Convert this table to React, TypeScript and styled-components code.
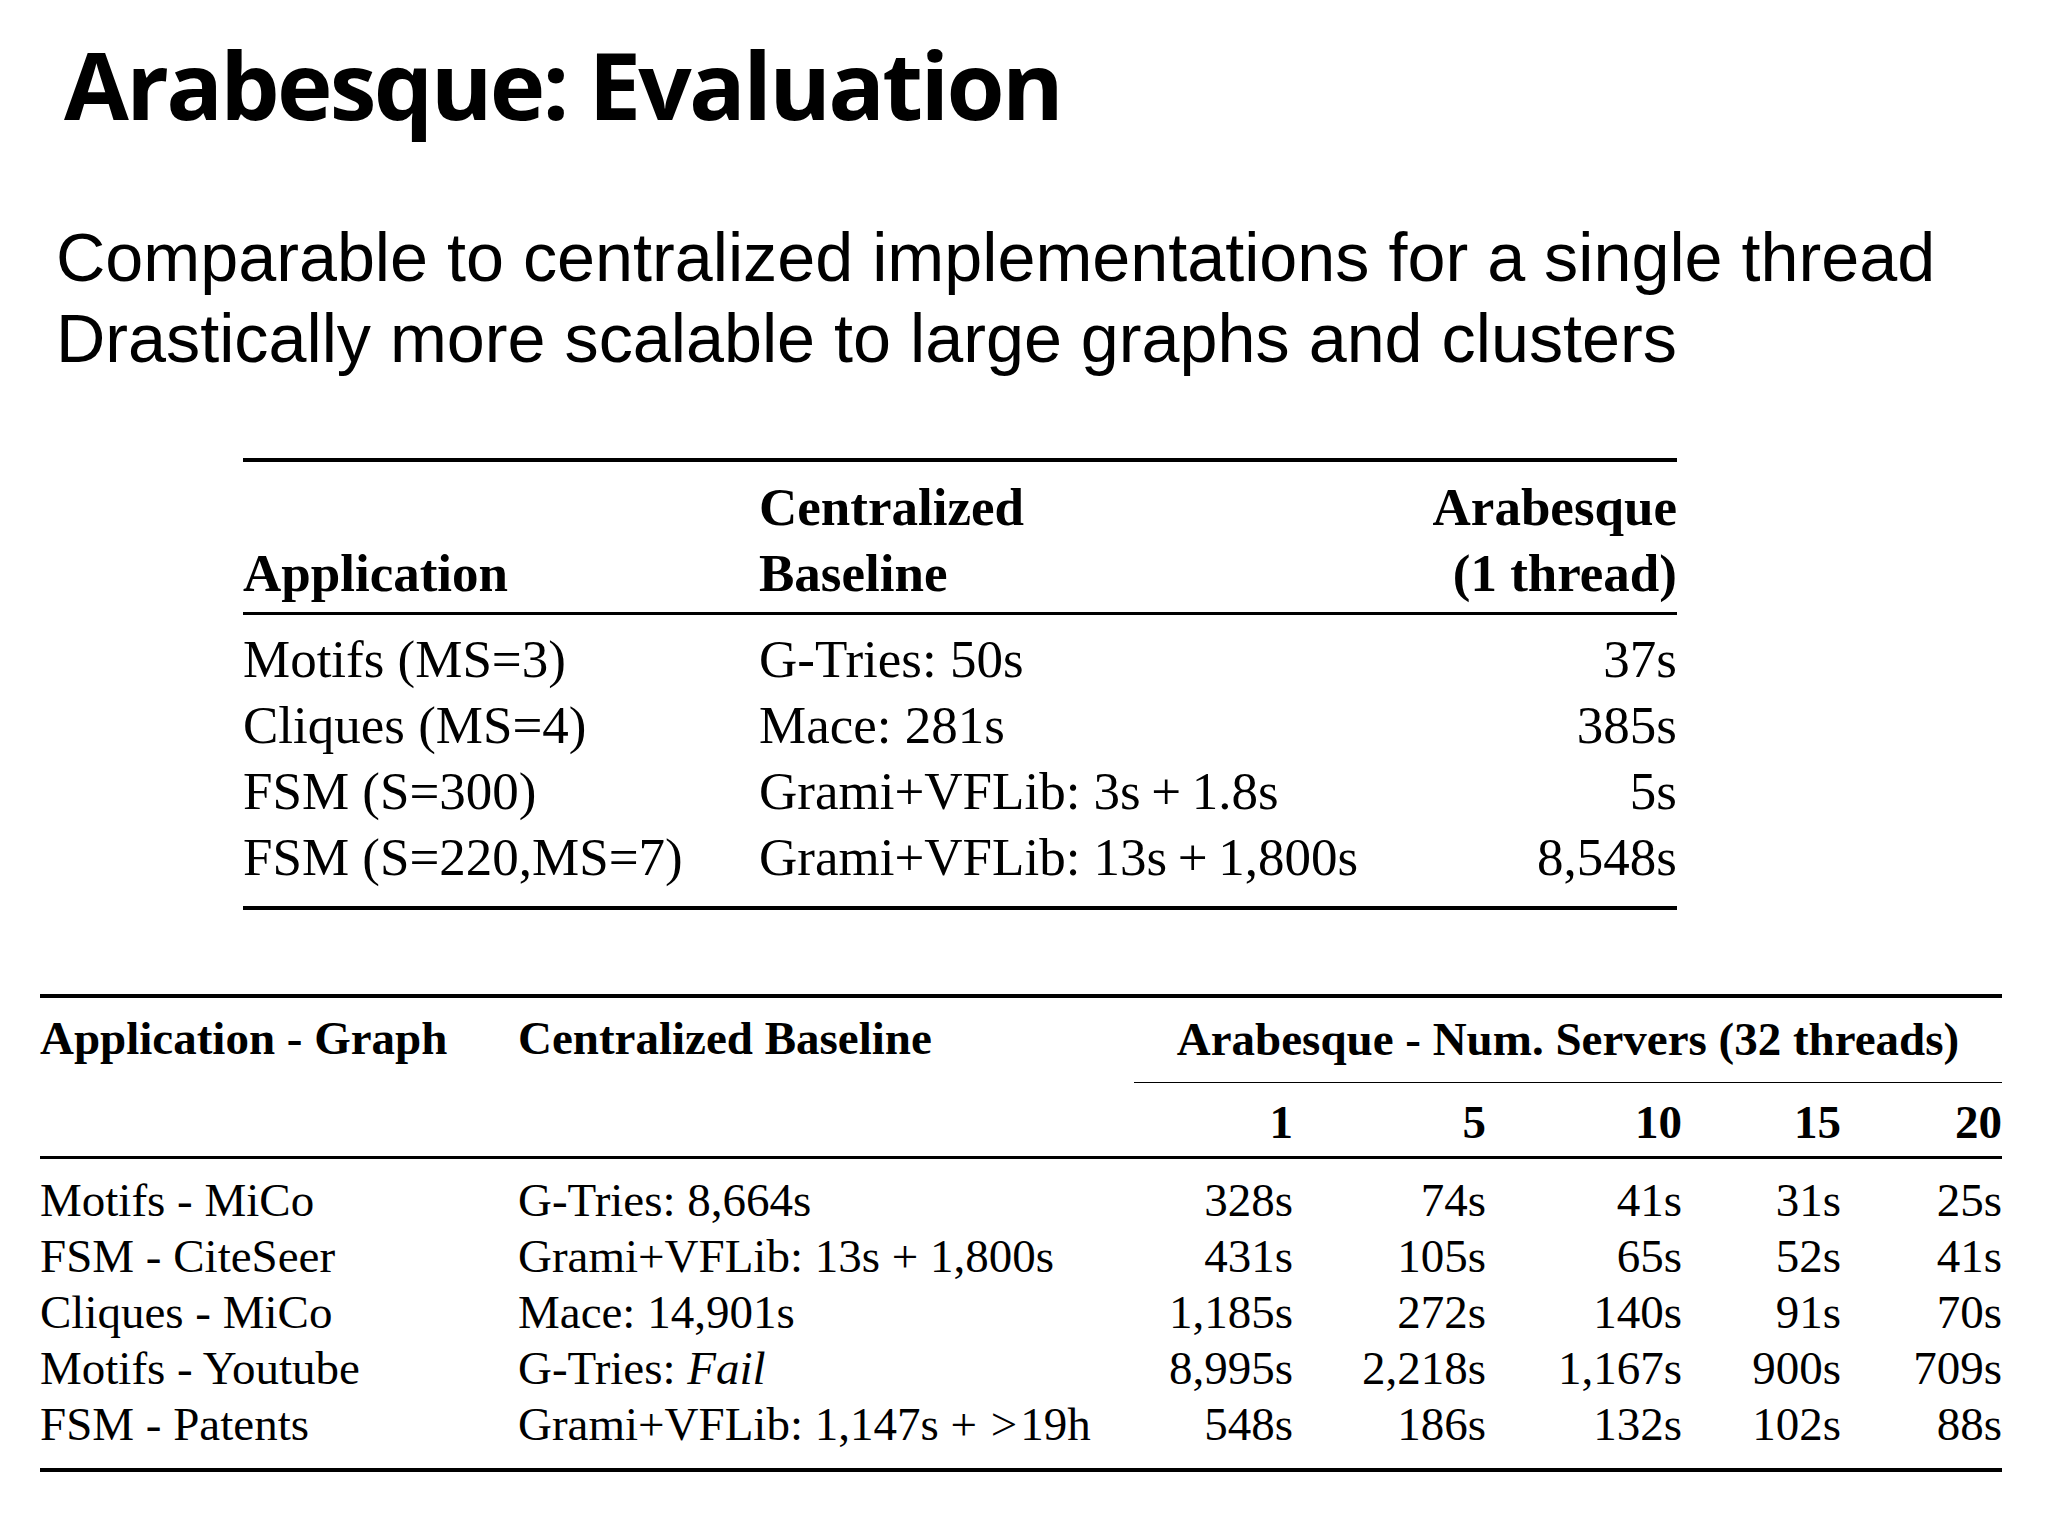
import React from "react";
import styled, { createGlobalStyle } from "styled-components";

const GlobalStyle = createGlobalStyle`
  html, body { margin: 0; padding: 0; background: #ffffff; }
  body { color: #000000; }
`;

const Slide = styled.div`
  width: 2048px;
  height: 1536px;
  box-sizing: border-box;
  padding-top: 28px;
  background: #ffffff;
  display: flex;
  flex-direction: column;
  overflow: hidden;
`;

const Title = styled.h1`
  margin: 0 0 0 64px;
  font-family: "Open Sans", "Noto Sans", sans-serif;
  font-weight: 700;
  font-size: 94px;
  line-height: 113px;
  letter-spacing: -2.7px;
  color: #000;
`;

const Lead = styled.div`
  margin: 76px 0 0 56px;
  font-family: "Liberation Sans", Arial, sans-serif;
  font-size: 68.3px;
  line-height: 81px;
  color: #000;
`;

const LeadLine = styled.div`
  white-space: nowrap;
`;

const Rule = styled.div<{ $w: number }>`
  height: ${(p) => p.$w}px;
  background: #000;
`;

/* ---------- Table 1 ---------- */

const TableOne = styled.div`
  margin: 79px 0 0 243px;
  width: 1434px;
  display: flex;
  flex-direction: column;
  font-family: "Liberation Serif", "Times New Roman", serif;
  font-size: 53px;
  line-height: 66px;
  color: #000;
`;

const OneRow = styled.div<{ $head?: boolean; $pt?: number; $pb?: number }>`
  display: grid;
  grid-template-columns: 516px 1fr auto;
  align-items: end;
  font-weight: ${(p) => (p.$head ? 700 : 400)};
  padding-top: ${(p) => p.$pt ?? 0}px;
  padding-bottom: ${(p) => p.$pb ?? 0}px;
  white-space: nowrap;
`;

const Cell = styled.div<{ $right?: boolean }>`
  text-align: ${(p) => (p.$right ? "right" : "left")};
`;

/* ---------- Table 2 ---------- */

const cols2 = "478px 616px 159px 193px 196px 159px 161px";

const TableTwo = styled.div`
  margin: 84px 0 0 40px;
  width: 1962px;
  display: flex;
  flex-direction: column;
  font-family: "Liberation Serif", "Times New Roman", serif;
  font-size: 47px;
  line-height: 56px;
  color: #000;
`;

const TwoRow = styled.div<{ $head?: boolean; $pt?: number; $pb?: number }>`
  display: grid;
  grid-template-columns: ${cols2};
  align-items: end;
  font-weight: ${(p) => (p.$head ? 700 : 400)};
  padding-top: ${(p) => p.$pt ?? 0}px;
  padding-bottom: ${(p) => p.$pb ?? 0}px;
  white-space: nowrap;
`;

const SpanHead = styled.div`
  grid-column: 3 / 8;
  text-align: center;
  padding-bottom: 15px;
  border-bottom: 1.5px solid #000;
`;

const HeadCell = styled.div`
  padding-bottom: 16.5px;
`;

const Num = styled.div`
  text-align: right;
`;

const Rel = styled.span`
  margin: 0 3px 0 2px;
`;

const Blank = styled.div``;

const t1 = [
  ["Motifs (MS=3)", "G-Tries: 50s", "37s"],
  ["Cliques (MS=4)", "Mace: 281s", "385s"],
  ["FSM (S=300)", "Grami+VFLib: 3s\u2009+\u20091.8s", "5s"],
  ["FSM (S=220,MS=7)", "Grami+VFLib: 13s\u2009+\u20091,800s", "8,548s"],
];

const t2: { app: string; base: React.ReactNode; nums: string[] }[] = [
  { app: "Motifs - MiCo", base: "G-Tries: 8,664s", nums: ["328s", "74s", "41s", "31s", "25s"] },
  { app: "FSM - CiteSeer", base: "Grami+VFLib: 13s + 1,800s", nums: ["431s", "105s", "65s", "52s", "41s"] },
  { app: "Cliques - MiCo", base: "Mace: 14,901s", nums: ["1,185s", "272s", "140s", "91s", "70s"] },
  {
    app: "Motifs - Youtube",
    base: (
      <>
        G-Tries: <i>Fail</i>
      </>
    ),
    nums: ["8,995s", "2,218s", "1,167s", "900s", "709s"],
  },
  {
    app: "FSM - Patents",
    base: (
      <>
        Grami+VFLib: 1,147s +<Rel> &gt;</Rel>19h
      </>
    ),
    nums: ["548s", "186s", "132s", "102s", "88s"],
  },
];

export default function App() {
  return (
    <>
      <GlobalStyle />
      <Slide>
        <Title>Arabesque: Evaluation</Title>
        <Lead>
          <LeadLine>Comparable to centralized implementations for a single thread</LeadLine>
          <LeadLine>Drastically more scalable to large graphs and clusters</LeadLine>
        </Lead>

        <TableOne>
          <Rule $w={4} />
          <OneRow $head $pt={12} $pb={6}>
            <Cell>Application</Cell>
            <Cell>
              Centralized
              <br />
              Baseline
            </Cell>
            <Cell $right>
              Arabesque
              <br />
              (1 thread)
            </Cell>
          </OneRow>
          <Rule $w={3} />
          <OneRow $pt={11} $pb={16}>
            <Cell>
              {t1.map((r) => (
                <div key={r[0]}>{r[0]}</div>
              ))}
            </Cell>
            <Cell>
              {t1.map((r) => (
                <div key={r[0]}>{r[1]}</div>
              ))}
            </Cell>
            <Cell $right>
              {t1.map((r) => (
                <div key={r[0]}>{r[2]}</div>
              ))}
            </Cell>
          </OneRow>
          <Rule $w={4} />
        </TableOne>

        <TableTwo>
          <Rule $w={4} />
          <TwoRow $head $pt={12}>
            <HeadCell>Application - Graph</HeadCell>
            <HeadCell>Centralized Baseline</HeadCell>
            <SpanHead>Arabesque - Num. Servers (32 threads)</SpanHead>
          </TwoRow>
          <TwoRow $head $pt={11.5} $pb={6}>
            <Blank />
            <Blank />
            {["1", "5", "10", "15", "20"].map((n) => (
              <Num key={n}>{n}</Num>
            ))}
          </TwoRow>
          <Rule $w={3} />
          <TwoRow $pt={13} $pb={16}>
            {t2.map((r) => (
              <React.Fragment key={r.app}>
                <div>{r.app}</div>
                <div>{r.base}</div>
                {r.nums.map((n, i) => (
                  <Num key={i}>{n}</Num>
                ))}
              </React.Fragment>
            ))}
          </TwoRow>
          <Rule $w={4} />
        </TableTwo>
      </Slide>
    </>
  );
}
